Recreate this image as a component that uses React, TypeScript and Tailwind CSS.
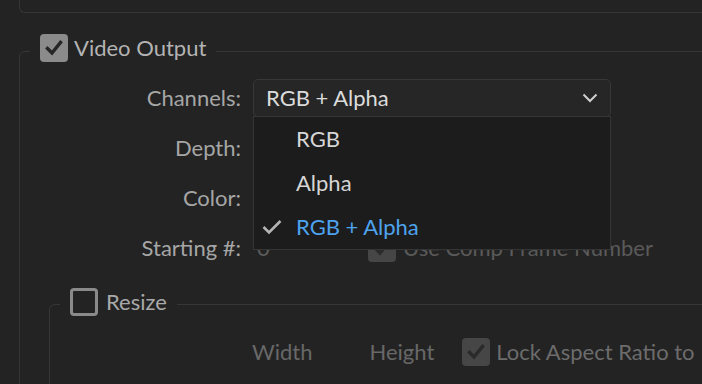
import React from 'react';

const Check = ({ color }: { color: string }) => (
  <svg width="28" height="28" viewBox="0 0 28 28">
    <path d="M7.5 14.5 L12 19 L20.5 8.5" fill="none" stroke={color} strokeWidth="3.4" strokeLinecap="square" />
  </svg>
);

const CheckBox = ({ checked, disabled }: { checked: boolean; disabled?: boolean }) =>
  checked ? (
    <span className={`flex w-[28px] h-[28px] rounded-[4px] ${disabled ? 'bg-[#464646]' : 'bg-[#8b8b8b]'}`}>
      <Check color={disabled ? '#2a2a2a' : '#262626'} />
    </span>
  ) : (
    <span className="block w-[28px] h-[28px] rounded-[4px] border-[3px] border-[#8a8a8a]" />
  );

const Label = ({ children }: { children: React.ReactNode }) => (
  <div className="w-[221px] shrink-0 text-right text-[#a6a6a6]">{children}</div>
);

const Select = ({ value }: { value?: string }) => (
  <div className="flex items-center justify-between w-[358px] h-[38px] px-[12px] border border-[#373737] rounded-[5px] bg-[#262626] text-[#dcdcdc]">
    <span>{value}</span>
    <svg width="16" height="10" viewBox="0 0 16 10">
      <path d="M1.5 1.5 L8 8 L14.5 1.5" fill="none" stroke="#cfcfcf" strokeWidth="2" />
    </svg>
  </div>
);

export default function App() {
  const items = ['RGB', 'Alpha', 'RGB + Alpha'];
  const selected = 'RGB + Alpha';

  return (
    <div
      className="w-[702px] h-[384px] overflow-hidden bg-[#232323] text-[22px] leading-none"
      style={{ fontFamily: 'Lato, "Open Sans", sans-serif' }}
    >
      <div className="ml-[19px] w-[760px] h-[13px] border-l border-b border-[#363636] rounded-bl-[6px]" />

      <fieldset className="ml-[19px] mt-[21px] w-[760px] h-[400px] p-0 m-0 border border-[#363636] rounded-tl-[6px]">
        <legend className="ml-[10px] px-[10px] pb-[6px] flex items-center gap-[6px]">
          <CheckBox checked />
          <span className="text-[#b3b3b3]">Video Output</span>
        </legend>

        <div className="flex flex-col gap-[12px] pt-[11px]">
          <div className="flex items-center gap-[12px] h-[38px]">
            <Label>Channels:</Label>
            <div className="relative">
              <Select value="RGB + Alpha" />
              <div className="absolute left-0 top-[37px] z-10 w-[358px] bg-[#1c1c1c] border border-[#353535]">
                {items.map((it) => (
                  <div key={it} className="flex items-center h-[44px]">
                    <span className="w-[42px] flex pl-[8px]">
                      {it === selected && (
                        <svg width="20" height="16" viewBox="0 0 20 16">
                          <path d="M1.5 8 L7 13.5 L18.5 2" fill="none" stroke="#b5b5b5" strokeWidth="2.6" />
                        </svg>
                      )}
                    </span>
                    <span className={it === selected ? 'text-[#4ea3ee]' : 'text-[#d6d6d6]'}>{it}</span>
                  </div>
                ))}
              </div>
            </div>
          </div>
          <div className="flex items-center gap-[12px] h-[38px]">
            <Label>Depth:</Label>
            <Select />
          </div>
          <div className="flex items-center gap-[12px] h-[38px]">
            <Label>Color:</Label>
            <Select />
          </div>
          <div className="flex items-center gap-[12px] h-[38px]">
            <Label>Starting #:</Label>
            <span className="w-[103px] pl-[4px] text-[#5c5c5c]">0</span>
            <CheckBox checked disabled />
            <span className="ml-[-5px] text-[#5a5a5a]">Use Comp Frame Number</span>
          </div>
        </div>

        <fieldset className="ml-[29px] mt-[21px] w-[740px] h-[200px] p-0 m-0 border border-[#363636] rounded-tl-[6px]">
          <legend className="ml-[10px] px-[10px] pb-[4px] flex items-center gap-[8px]">
            <CheckBox checked={false} />
            <span className="text-[#a9a9a9]">Resize</span>
          </legend>
          <div className="flex items-center h-[28px] mt-[18px] text-[#686868] whitespace-nowrap">
            <span className="ml-[202px]">Width</span>
            <span className="ml-[57px]">Height</span>
            <span className="ml-[28px]"><CheckBox checked disabled /></span>
            <span className="ml-[6px] text-[#6c6c6c]">Lock Aspect Ratio to 16:9</span>
          </div>
        </fieldset>
      </fieldset>
    </div>
  );
}
